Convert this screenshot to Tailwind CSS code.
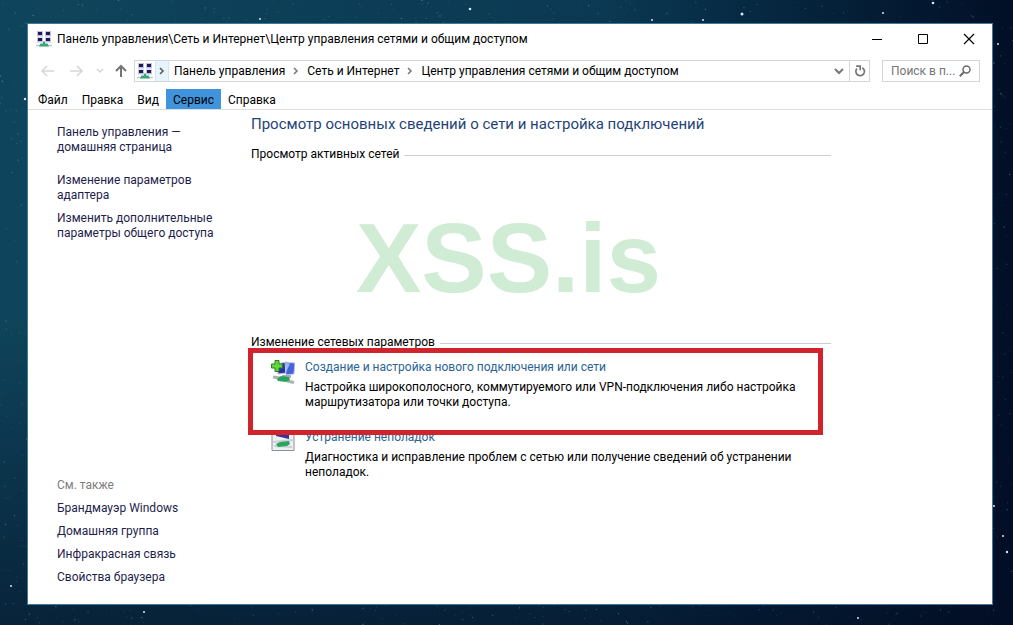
<!DOCTYPE html>
<html lang="ru">
<head>
    <meta charset="UTF-8">
    <meta name="viewport" content="width=device-width, initial-scale=1.0">
    <script src="https://cdn.jsdelivr.net/npm/@tailwindcss/browser@4"></script>
    <title>Центр управления сетями и общим доступом</title>
</head>
<body class="relative flex min-h-screen bg-linear-to-r from-[#0f455c] via-[#0b3852] via-60% to-[#020f26] pt-6 pr-[21px] pb-[21px] pl-7 font-[Roboto,'Open_Sans',sans-serif] text-[12px] leading-[15px] text-black">

<!-- Night sky -->
<div class="absolute inset-0 bg-linear-to-b from-transparent from-50% to-[#020d24]/60"></div>
<svg id="stars" class="absolute inset-0 h-full w-full" aria-hidden="true">
  <g fill="#d5e6ff">
    <circle cx="742" cy="14" r="1.5"/><circle cx="933" cy="3" r="1.3"/><circle cx="470" cy="9" r="1.3"/>
    <circle cx="260" cy="19" r="1"/><circle cx="25" cy="99" r="1.2"/><circle cx="703" cy="20" r="1"/>
    <circle cx="998" cy="44" r="1"/><circle cx="652" cy="20" r="1"/><circle cx="883" cy="13" r="1"/>
    <circle cx="1003" cy="536" r="1"/><circle cx="1007" cy="552" r="1.2"/><circle cx="994" cy="506" r="1"/>
    <circle cx="11" cy="586" r="1"/><circle cx="144" cy="612" r="1"/><circle cx="858" cy="618" r="1"/>
  </g>
</svg>

<svg class="hidden" aria-hidden="true">
  <symbol id="net" viewBox="0 0 16 16">
    <g fill="#c3c4dc">
      <path d="M1 0h6v5.500H1zM9 0h6v5.500H9zM1 6.500h6v5H1zM9 6.500h6v5H9z"/>
    </g>
    <g fill="#1b1b5c">
      <path d="M2 1h4v3H2zM10 1h4v3h-4zM2 7h4v3H2zM10 7h4v3h-4z"/>
    </g>
    <path d="M0 14.500h16" stroke="#b9c9c4" stroke-width="1.500"/>
    <path d="M7 10.500h2v2h2.500L13 15.500H3l1.500-3H7z" fill="#37a678"/>
  </symbol>
</svg>

<!-- Window -->
<div class="relative flex min-w-0 flex-1 flex-col bg-white outline outline-[#3b7c98]">

  <!-- Title bar -->
  <header class="flex h-[29px] items-center pl-2">
    <svg class="mr-[5px] h-4 w-4"><use href="#net"/></svg>
    <h1 class="flex-1 truncate pt-0.5">Панель управления\Сеть и Интернет\Центр управления сетями и общим доступом</h1>
    <button aria-label="Свернуть" class="flex h-full w-[46px] items-center justify-center">
      <svg class="h-3 w-3" fill="none" stroke="#000" viewBox="0 0 12 12"><path d="M1 6.500h10"/></svg>
    </button>
    <button aria-label="Развернуть" class="flex h-full w-[46px] items-center justify-center">
      <svg class="h-3 w-3" fill="none" stroke="#000" viewBox="0 0 12 12"><path d="M1.500 1.500h9v9h-9z"/></svg>
    </button>
    <button aria-label="Закрыть" class="flex h-full w-[46px] items-center justify-center">
      <svg class="h-3 w-3" fill="none" stroke="#000" stroke-width="1.200" viewBox="0 0 12 12"><path d="M1 1l10 10M11 1L1 11"/></svg>
    </button>
  </header>

  <!-- Address bar -->
  <nav class="mt-[7px] flex h-[22px] items-center pr-3 pl-3">
    <button aria-label="Назад" class="w-[29px]">
      <svg class="h-4 w-4" fill="none" stroke="#d6d6d6" stroke-width="1.500" viewBox="0 0 16 16"><path d="M14 8H2M7 3L2 8l5 5"/></svg>
    </button>
    <button aria-label="Вперёд" class="w-[27px]">
      <svg class="h-4 w-4" fill="none" stroke="#d6d6d6" stroke-width="1.500" viewBox="0 0 16 16"><path d="M1 8h12M8 3l5 5-5 5"/></svg>
    </button>
    <button aria-label="Журнал" class="w-[17px]">
      <svg class="h-2 w-2" fill="none" stroke="#d6d6d6" stroke-width="1.500" viewBox="0 0 8 8"><path d="M1 2l3 3 3-3"/></svg>
    </button>
    <button aria-label="Вверх" class="w-[21px]">
      <svg class="h-4 w-4" fill="none" stroke="#757575" stroke-width="2" viewBox="0 0 16 16"><path d="M8 14V3M3 8l5-5 5 5"/></svg>
    </button>
    <div class="flex h-full min-w-0 flex-1 items-center border border-[#d2d6d8]">
      <svg class="mx-0.5 h-4 w-4 shrink-0"><use href="#net"/></svg>
      <span class="flex h-full w-[14px] items-center justify-center border-x border-[#cfe6f5] bg-[#e7f4fc]">
        <svg class="h-2 w-2" fill="none" stroke="#555" stroke-width="1.500" viewBox="0 0 8 8"><path d="M2 1l3 3-3 3"/></svg>
      </span>
      <a href="#" class="ml-[5px]">Панель управления</a>
      <svg class="mx-[7px] h-2 w-2" fill="none" stroke="#777" stroke-width="1.500" viewBox="0 0 8 8"><path d="M2 1l3 3-3 3"/></svg>
      <a href="#">Сеть и Интернет</a>
      <svg class="mx-[7px] h-2 w-2" fill="none" stroke="#777" stroke-width="1.500" viewBox="0 0 8 8"><path d="M2 1l3 3-3 3"/></svg>
      <a href="#" class="flex-1 truncate">Центр управления сетями и общим доступом</a>
      <button aria-label="Предыдущие расположения" class="flex h-full w-5 items-center justify-center">
        <svg class="h-2.5 w-2.5" fill="none" stroke="#777" stroke-width="2" viewBox="0 0 10 10"><path d="M1 3l4 4 4-4"/></svg>
      </button>
      <button aria-label="Обновить" class="flex h-full w-5 items-center justify-center border-l border-[#d2d6d8]">
        <svg class="h-3 w-3" fill="none" stroke="#757575" stroke-width="1.700" viewBox="0 0 12 12"><path d="M8.300 2.700A4.300 4.300 0 1 1 3 3.500M2.200 1.200h4v4"/></svg>
      </button>
    </div>
    <label class="ml-3 flex h-full w-[98px] items-center border border-[#d2d6d8] pl-2 pr-2">
      <input type="text" aria-label="Поиск" placeholder="Поиск в п..." class="w-0 flex-1 outline-none placeholder:text-[#757575]">
      <svg class="h-3 w-3" fill="none" stroke="#6b6b6b" stroke-width="1.500" viewBox="0 0 12 12"><circle cx="7.500" cy="4.500" r="3.500"/><path d="M5 7L.8 11.200" stroke-width="2"/></svg>
    </label>
  </nav>

  <!-- Menu -->
  <div class="mt-[7px] flex h-[21px] items-stretch border-b border-[#dcdfe1] pl-[3px]">
    <button class="px-[7px] pt-0.5">Файл</button>
    <button class="px-[7px] pt-0.5">Правка</button>
    <button class="px-[7px] pt-0.5">Вид</button>
    <button class="bg-[#3f94dc] px-[7px] pt-0.5">Сервис</button>
    <button class="px-[7px] pt-0.5">Справка</button>
  </div>

  <!-- Content -->
  <div class="flex flex-1">
    <aside class="flex w-[223px] shrink-0 flex-col pt-[15px] pb-[19px] pl-[29px] text-[#1e1e4b]">
      <a href="#">Панель управления —<br>домашняя страница</a>
      <a href="#" class="mt-[18px]">Изменение параметров<br>адаптера</a>
      <a href="#" class="mt-2">Изменить дополнительные<br>параметры общего доступа</a>
      <div class="mt-auto flex flex-col gap-2">
        <h2 class="text-[#7d7d7d]">См. также</h2>
        <a href="#">Брандмауэр Windows</a>
        <a href="#">Домашняя группа</a>
        <a href="#">Инфракрасная связь</a>
        <a href="#">Свойства браузера</a>
      </div>
    </aside>

    <main class="max-w-[580px] flex-1">
      <h2 class="pt-1 text-[15px] leading-5 whitespace-nowrap text-[#1f4478]">Просмотр основных сведений о сети и настройка подключений</h2>
      <div class="mt-[13px] flex items-center gap-[5px]">
        <h3>Просмотр активных сетей</h3>
        <div class="mt-0.5 h-px flex-1 bg-[#cccfd2]"></div>
      </div>
      <p class="flex h-[173px] items-center pl-[105px] pt-[18px] font-['Liberation_Sans',Arial,sans-serif] text-[98px] leading-[100px] font-bold text-[#d1ecd4]">XSS.is</p>
      <div class="flex items-center gap-[5px]">
        <h3>Изменение сетевых параметров</h3>
        <div class="mt-0.5 h-px flex-1 bg-[#c6ccdc]"></div>
      </div>

      <div class="relative mt-[10px] flex h-[70px] gap-2.5 pl-5">
        <div class="absolute -top-3 right-2 -left-[3px] z-10 h-[87px] border-5 border-[#d1232c]"></div>
        <svg class="h-6 w-6 shrink-0" viewBox="0 0 24 24">
          <path d="M7 4l8-2v11l-8 1z" fill="#2434a8" stroke="#b8bfd8"/>
          <path d="M14 2l10 1-1 11-8 1z" fill="#4563d8" stroke="#c5cce6"/>
          <path d="M15 3l4 .500-4 9z" fill="#9db6f2"/>
          <path d="M11 15h9v3h-9z" fill="#a7b0b8"/>
          <path d="M2 17l7 1M16 21l7 1.500" stroke="#a9b4b0" stroke-width="3"/>
          <path d="M6 19l4-3 8 1 1 3-4 2-8-1z" fill="#27a35a"/>
          <path d="M4 .500h4V4h3.500v4H8v3.500H4V8H.500V4H4z" fill="#67d23b" stroke="#23821d"/>
        </svg>
        <div>
          <a href="#" class="text-[#2a6496]">Создание и настройка нового подключения или сети</a>
          <p class="mt-[5px]">Настройка широкополосного, коммутируемого или VPN-подключения либо настройка маршрутизатора или точки доступа.</p>
        </div>
      </div>

      <div class="flex gap-2.5 pl-5">
        <svg class="h-6 w-6 shrink-0" viewBox="0 0 24 24">
          <path d="M1 0h22v20.500H1z" fill="#eef0f4" stroke="#8d9299"/>
          <path d="M5 2l13 1v6L5 6z" fill="#38309c"/>
          <path d="M2 12l20-2M3 16l18 1" stroke="#c9d2d0" stroke-width="2"/>
          <path d="M5 14l4-2 9-1 1 3-3 2-9 1z" fill="#2aa65c"/>
        </svg>
        <div>
          <a href="#" class="text-[#2a6496]">Устранение неполадок</a>
          <p class="mt-[5px]">Диагностика и исправление проблем с сетью или получение сведений об устранении неполадок.</p>
        </div>
      </div>
    </main>
  </div>
</div>

<script>
  // faint small stars, same pattern on every load
  const sky = document.getElementById("stars");
  let seed = 7;
  function rnd() {
    seed = (seed * 16807) % 2147483647;
    return seed / 2147483647;
  }
  for (let i = 0; i < 5000; i++) {
    const c = document.createElementNS("http://www.w3.org/2000/svg", "circle");
    c.setAttribute("cx", rnd() * 100 + "%");
    c.setAttribute("cy", rnd() * 100 + "%");
    c.setAttribute("r", 0.7);
    c.setAttribute("fill", "#7fb4c4");
    c.setAttribute("opacity", rnd() * rnd() * 0.6);
    sky.appendChild(c);
  }
</script>
</body>
</html>
